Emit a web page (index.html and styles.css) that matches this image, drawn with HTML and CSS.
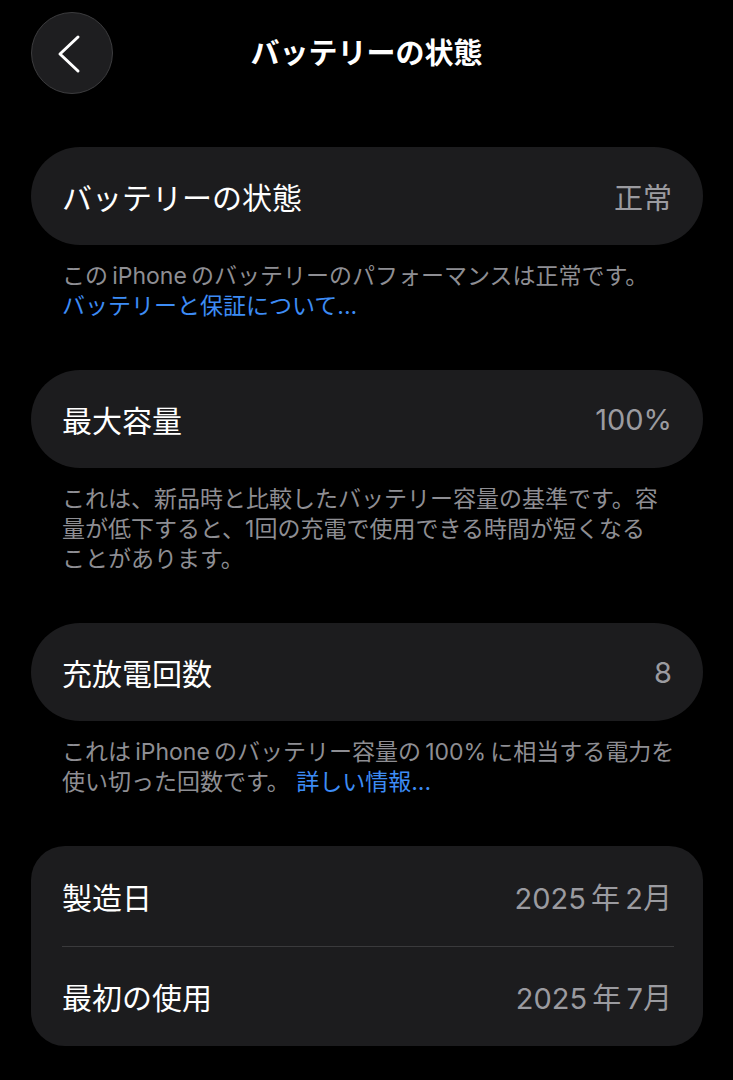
FILE: index.html
```html
<!DOCTYPE html>
<html lang="ja">
<head>
<meta charset="utf-8">
<title>バッテリーの状態</title>
<link rel="stylesheet" href="styles.css">
</head>
<body>
<div class="screen">
  <header class="nav">
    <div class="nav-left">
      <button class="back" aria-label="戻る">
        <svg width="80" height="80" viewBox="0 0 80 80" aria-hidden="true">
          <path d="M46 24 L28 41 L46 58" fill="none" stroke="#ffffff" stroke-width="3" stroke-linecap="round" stroke-linejoin="round"/>
        </svg>
      </button>
    </div>
    <h1 class="title">バッテリーの状態</h1>
    <div class="nav-right"></div>
  </header>

  <main class="content">
    <section class="group">
      <div class="card pill">
        <div class="row">
          <span class="label">バッテリーの状態</span>
          <span class="value">正常</span>
        </div>
      </div>
      <p class="footnote">この&#8201;iPhone&#8201;のバッテリーのパフォーマンスは正常です。<br><a class="link" href="#">バッテリーと保証について...</a></p>
    </section>

    <section class="group">
      <div class="card pill">
        <div class="row">
          <span class="label">最大容量</span>
          <span class="value">100%</span>
        </div>
      </div>
      <p class="footnote">これは、新品時と比較したバッテリー容量の基準です。容<br>量が低下すると、1回の充電で使用できる時間が短くなる<br>ことがあります。</p>
    </section>

    <section class="group">
      <div class="card pill">
        <div class="row">
          <span class="label">充放電回数</span>
          <span class="value">8</span>
        </div>
      </div>
      <p class="footnote">これは&#8201;iPhone&#8201;のバッテリー容量の&#8201;100%&#8201;に相当する電力を<br>使い切った回数です。 <a class="link" href="#">詳しい情報...</a></p>
    </section>

    <section class="group">
      <div class="card rounded">
        <div class="row">
          <span class="label">製造日</span>
          <span class="value">2025&#8201;年&#8201;2月</span>
        </div>
        <div class="divider"></div>
        <div class="row">
          <span class="label">最初の使用</span>
          <span class="value">2025&#8201;年&#8201;7月</span>
        </div>
      </div>
    </section>
  </main>
</div>
</body>
</html>
```

FILE: styles.css
```css
* {
  box-sizing: border-box;
}

html, body {
  margin: 0;
  padding: 0;
  background: #000000;
}

body {
  font-family: "Inter", "Noto Sans CJK JP", "Noto Sans", sans-serif;
  color: #ffffff;
}

.screen {
  width: 733px;
  min-height: 1080px;
  background: #000000;
}

.nav {
  display: grid;
  grid-template-columns: 1fr auto 1fr;
  align-items: center;
  height: 82px;
  margin-top: 12px;
}

.nav-left {
  padding-left: 31px;
  display: flex;
  align-items: center;
}

.back {
  width: 82px;
  height: 82px;
  border-radius: 50%;
  background: #1e1e20;
  border: 1px solid #3c3c3e;
  padding: 0;
  margin: 0;
  display: flex;
  align-items: center;
  justify-content: center;
}

.back svg {
  display: block;
}

.title {
  margin: 0;
  font-size: 29px;
  font-weight: 700;
  letter-spacing: 0;
  color: #ffffff;
  line-height: 1;
  white-space: nowrap;
}

.content {
  padding: 53px 30px 0 31px;
}

.group {
  margin-bottom: 49px;
}

.card {
  background: #1c1c1e;
}

.pill {
  border-radius: 49px;
}

.rounded {
  border-radius: 34px;
}

.row {
  height: 98px;
  display: flex;
  align-items: center;
  justify-content: space-between;
  padding: 0 31px;
}

.rounded .row {
  height: 99.5px;
}

.label {
  font-size: 30px;
  color: #ffffff;
  white-space: nowrap;
}

.value {
  font-size: 29px;
  color: #9b9ba0;
  white-space: nowrap;
}

.divider {
  height: 1px;
  background: #3a3a3c;
  margin: 0 29px 0 31px;
}

.footnote {
  margin: 16px 0 0 0;
  padding: 0 20px 0 31px;
  font-size: 23px;
  line-height: 30px;
  color: #8e8e93;
  white-space: nowrap;
}

.link {
  color: #3d8cf5;
  text-decoration: none;
}
```
